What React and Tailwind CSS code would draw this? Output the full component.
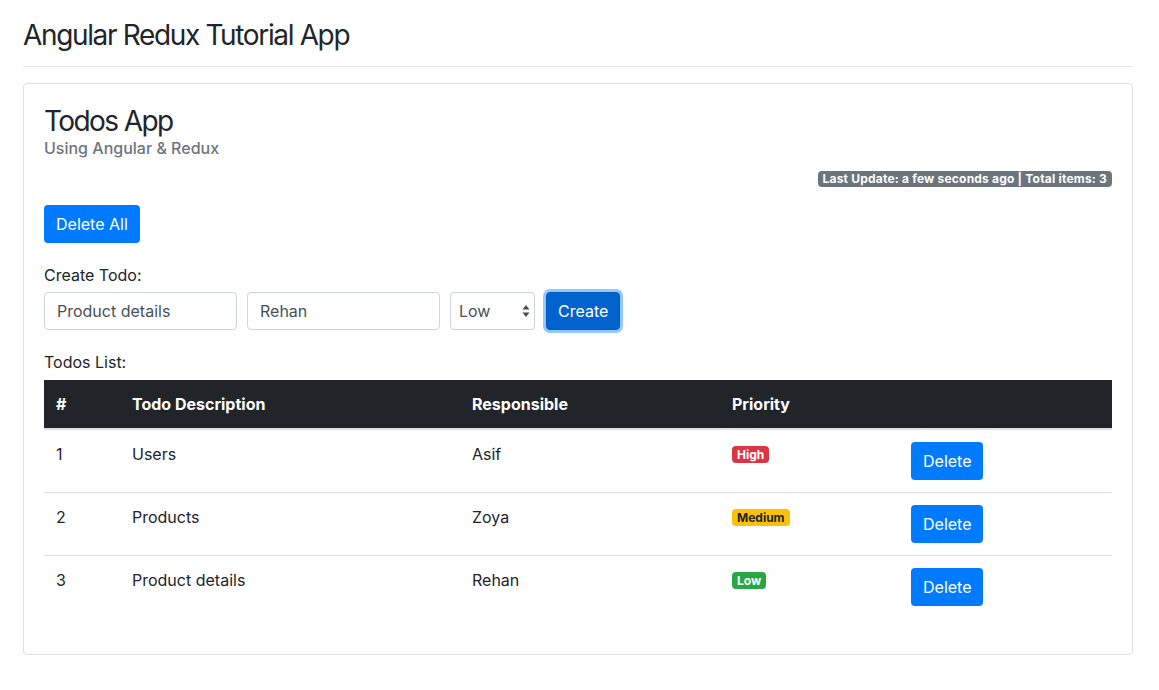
import React from "react";

const todos = [
  { id: 1, description: "Users", responsible: "Asif", priority: "High" },
  { id: 2, description: "Products", responsible: "Zoya", priority: "Medium" },
  { id: 3, description: "Product details", responsible: "Rehan", priority: "Low" },
];

const badgeClass = {
  High: "bg-[#dc3545] text-white",
  Medium: "bg-[#ffc107] text-[#212529]",
  Low: "bg-[#28a745] text-white",
};

const PriorityBadge = ({ priority }) => (
  <span
    className={`inline-block rounded-[4px] px-[5px] py-[2px] text-[12px] font-bold leading-[13px] align-[1px] ${badgeClass[priority]}`}
  >
    {priority}
  </span>
);

const App = () => {
  return (
    <div
      className="min-h-screen bg-white text-[16px] leading-[24px] text-[#212529]"
      style={{ fontFamily: "Inter, 'Noto Sans', sans-serif" }}
    >
      <div className="ml-[23px] w-[1110px]">
        <h3 className="pt-[18px] text-[28px] font-normal leading-[34px] tracking-[-1.35px]">
          Angular Redux Tutorial App
        </h3>
        <hr className="mt-[14px] border-t border-[#e5e5e5]" />

        <div className="mt-[16px] rounded-[4px] border border-[#dfdfdf] p-[20px]">
          <h4 className="text-[28px] font-normal leading-[34px] tracking-[-1.6px]">Todos App</h4>
          <h6 className="mt-[1px] text-[16px] font-medium leading-[19px] text-[#6c757d]">
            Using Angular &amp; Redux
          </h6>

          <div className="mt-[13px] flex justify-end">
            <span className="rounded-[4px] bg-[#6c757d] px-[5px] text-[12px] font-bold leading-[16px] tracking-[0.2px] text-white">
              Last Update: a few seconds ago | Total items: 3
            </span>
          </div>

          <button className="mt-[18px] h-[38px] rounded-[4px] bg-[#007bff] px-[12px] text-white">
            Delete All
          </button>

          <div className="mt-[20px]">Create Todo:</div>
          <div className="mt-[5px] flex items-center gap-[10px]">
            <div className="flex h-[38px] w-[193px] items-center rounded-[4px] border border-[#ced4da] px-[12px] text-[#495057]">
              Product details
            </div>
            <div className="flex h-[38px] w-[193px] items-center rounded-[4px] border border-[#ced4da] px-[12px] text-[#495057]">
              Rehan
            </div>
            <div className="flex h-[38px] w-[85px] items-center justify-between rounded-[4px] border border-[#ced4da] pl-[8px] pr-[4px] text-[#495057]">
              <span>Low</span>
              <svg width="8" height="14" viewBox="0 0 8 14">
                <path d="M4 1 L7.5 5.5 H0.5 Z" fill="#4a4a4a" />
                <path d="M4 13 L7.5 8.5 H0.5 Z" fill="#4a4a4a" />
              </svg>
            </div>
            <button className="ml-[1px] h-[38px] rounded-[4px] border border-[#005cbf] bg-[#0062cc] px-[11px] text-white shadow-[0_0_0_3px_rgba(38,143,255,0.5)]">
              Create
            </button>
          </div>

          <div className="mt-[20px]">Todos List:</div>
          <table className="mt-[6px] mb-[16px] w-full border-collapse text-left">
            <thead>
              <tr className="border-b-2 border-[#dee2e6] bg-[#212529] text-white">
                <th className="w-[76px] p-[12px] font-bold">#</th>
                <th className="w-[340px] p-[12px] font-bold">Todo Description</th>
                <th className="w-[260px] p-[12px] font-bold">Responsible</th>
                <th className="w-[179px] p-[12px] font-bold">Priority</th>
                <th className="p-[12px]"></th>
              </tr>
            </thead>
            <tbody>
              {todos.map((todo) => (
                <tr key={todo.id} className="border-t border-[#dee2e6] align-top">
                  <td className="p-[12px]">{todo.id}</td>
                  <td className="p-[12px]">{todo.description}</td>
                  <td className="p-[12px]">{todo.responsible}</td>
                  <td className="p-[12px]">
                    <PriorityBadge priority={todo.priority} />
                  </td>
                  <td className="p-[12px]">
                    <button className="h-[38px] rounded-[4px] bg-[#007bff] px-[12px] text-white">
                      Delete
                    </button>
                  </td>
                </tr>
              ))}
            </tbody>
          </table>
        </div>
      </div>
    </div>
  );
};

export default App;
